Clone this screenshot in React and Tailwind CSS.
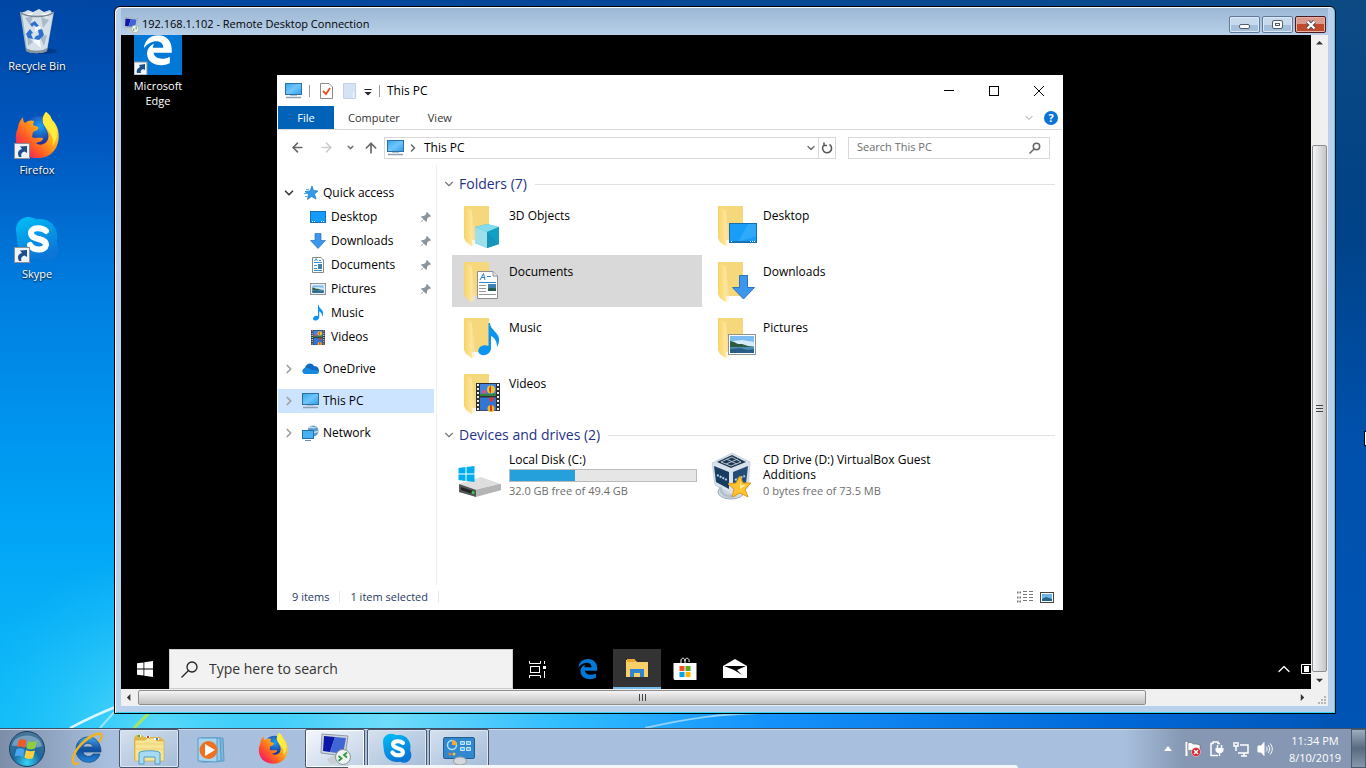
import React, { useState } from "react";
import { ArrowLeft, ArrowRight, ArrowUp, ChevronDown, ChevronRight, ChevronUp } from "lucide-react";

/* ---------- icons ---------- */

const ShortcutArrow = ({ y = 31 }) => (
  <g transform={`translate(1 ${y})`}>
    <rect x="0.5" y="0.5" width="15" height="15" fill="#eef3f8" stroke="#8a8f98" />
    <path d="M5 14C3 10 4 7 8 6L6 3.5L13 3V10L10.5 8.5C7.5 9.5 6.5 11 7.5 14Z" fill="#1f4e8c" />
  </g>
);

const RecycleBinIcon = () => (
  <svg viewBox="0 0 48 48" className="size-12">
    <ellipse cx="30" cy="43" rx="14" ry="3" fill="#002a66" opacity="0.5" />
    <path d="M7 4L13 43C18 46 29 46 34 43L41 4Z" fill="#a9bccb" opacity="0.92" />
    <path d="M9 5L15 2L20 4L26 1L31 4L37 2L40 6L34 41C28 43 19 43 14 41Z" fill="#d6e0e8" />
    <path d="M12 10L20 8L17 17ZM28 9L36 12L30 20ZM14 27L20 34L15 38ZM27 29L34 27L31 38Z" fill="#a9bac9" />
    <path d="M22 12L28 20L22 24ZM20 33L26 28L28 40ZM13 6L20 5L17 9ZM28 6L36 5L33 10Z" fill="#f7fafc" />
    <path d="M7 4C14 10 34 10 41 4" fill="none" stroke="#788791" strokeWidth="1.5" />
    <path d="M17 16l5-3 4 5-3 1-2-2-2 2zM13 26l4-5 3 4-2 1 2 5-5-1zM25 22l4-1 2 6-5 5-5-1 2-3 3-1z" fill="#2d6fcf" />
    <path d="M13 40C19 44 28 44 34 40L34 43C28 46 19 46 13 43Z" fill="#87949e" />
  </svg>
);

const FirefoxIcon = ({ shortcut, className = "size-12" }) => (
  <svg viewBox="0 0 48 48" className={className}>
    <defs>
      <linearGradient id="fxBody" x1="0.9" y1="0.1" x2="0.1" y2="0.9">
        <stop offset="0" stopColor="#fff04a" />
        <stop offset="0.4" stopColor="#ffa51b" />
        <stop offset="0.7" stopColor="#ff5a26" />
        <stop offset="1" stopColor="#f5156c" />
      </linearGradient>
      <radialGradient id="fxGlobe" cx="0.5" cy="0.3">
        <stop offset="0" stopColor="#17a3f3" />
        <stop offset="1" stopColor="#20309b" />
      </radialGradient>
    </defs>
    <circle cx="27" cy="21" r="17" fill="url(#fxGlobe)" />
    <path
      d="M33 0C39 4 38 8 40 9C50 18 48 46 25 46C2 46 0 25 5 16C5 12 7 8 10 5C10 9 11 10 12 11C15 8 19 8 21 9L20 13L25 15C26 18 23 19 20 20L19 25C22 27 26 25 30 26C30 30 25 30 23 31C26 34 33 33 35 27C37 21 32 15 30 11C29 7 30 3 33 0Z"
      fill="url(#fxBody)"
    />
    <path d="M33 0C39 4 38 8 40 9C45 17 46 27 39 34C44 23 30 16 30 9C30 5 31 3 33 0Z" fill="#ffec3f" />
    {shortcut && <ShortcutArrow />}
  </svg>
);

const SkypeIcon = ({ shortcut, className = "size-12" }) => (
  <svg viewBox="0 0 48 48" className={className}>
    <defs>
      <linearGradient id="skype" x1="0" y1="0" x2="0.4" y2="1">
        <stop offset="0" stopColor="#00c0f7" />
        <stop offset="1" stopColor="#0b75d8" />
      </linearGradient>
    </defs>
    <path
      d="M15 1C21 1 22 4 26 3C38 2 46 13 44 24C43 28 47 30 45 37C42 45 34 46 29 43C15 46 4 37 4 23C4 20 3 18 3 13C3 6 9 1 15 1Z"
      fill="url(#skype)"
    />
    <path
      d="M33 15C29 11 18 11 18 17C18 25 33 21 33 29C32 35 21 35 17 29"
      fill="none"
      stroke="#fff"
      strokeWidth="6"
      strokeLinecap="round"
    />
    {shortcut && <ShortcutArrow />}
  </svg>
);

const EDGE_PATH =
  "M2 22C4 8 13 2 24 2C37 2 45 11 45 24V29H17C18 38 31 41 42 35V45C28 52 7 47 7 30C7 22 13 17 18 15C16 18 16 20 16 21H32C32 7 12 8 2 22Z";

const EdgeTile = () => (
  <svg viewBox="0 0 48 48" className="size-12">
    <rect width="48" height="48" fill="#0078d7" />
    <path d={EDGE_PATH} transform="translate(8.5 7) scale(0.65)" fill="#fff" />
    <g transform="translate(0 35)">
      <rect width="13" height="13" fill="#f3f6f9" stroke="#8a8f98" />
      <path d="M3 11C2 8 4 6 6 5L5 3L11 2V8L9 7C7 8 6 9 7 11Z" fill="#1f4e8c" />
    </g>
  </svg>
);

const EdgeIcon = () => (
  <svg viewBox="0 0 48 50" className="size-[22px]">
    <path d={EDGE_PATH} fill="#0078d7" />
  </svg>
);

const WindowsIcon = ({ className = "size-4", fill = "#fff" }) => (
  <svg viewBox="0 0 16 16" className={className} fill={fill}>
    <path d="M0 2.3L6.5 1.4V7.6H0ZM7.3 1.3L16 0V7.6H7.3ZM0 8.4H6.5V14.6L0 13.7ZM7.3 8.4H16V16L7.3 14.7Z" />
  </svg>
);

const RdpIcon = ({ className = "size-4" }) => (
  <svg viewBox="0 0 32 32" className={className}>
    <path d="M8 26L16 22L21 25L16 31H11Z" fill="#c9ced4" />
    <path d="M3 1L29 3L26 23L2 20Z" fill="#cfd5dc" stroke="#9099a5" />
    <path d="M5 3L16 4L11 19L4 18Z" fill="#0a17a8" />
    <path d="M16 4L27 5L24 21L11 19Z" fill="#3f66d3" />
    <circle cx="24" cy="24" r="7.5" fill="#eef2f2" stroke="#8d9599" />
    <path d="M19.5 23L22.5 25.5L19.5 28M28 19.5L25 22L28 24.5" fill="none" stroke="#2f9a3b" strokeWidth="1.8" />
  </svg>
);

const PcIcon = ({ className = "h-4 w-[17px]" }) => (
  <svg viewBox="0 0 17 16" className={className}>
    <defs>
      <linearGradient id="pc" x1="0" y1="0" x2="1" y2="1">
        <stop offset="0" stopColor="#35a6ee" />
        <stop offset="0.5" stopColor="#6fc6fb" />
        <stop offset="1" stopColor="#2d9ceb" />
      </linearGradient>
    </defs>
    <rect x="0.5" y="0.5" width="16" height="11" fill="url(#pc)" stroke="#2b6fa5" />
    <path d="M1 14.5H16" stroke="#8aa0b2" strokeWidth="1.5" />
    <path d="M5 12.5H12" stroke="#b5c4d0" />
  </svg>
);

const StarIcon = () => (
  <svg viewBox="0 0 16 16" className="size-4">
    <path d="M9 1L10.5 5.5L15 6L11.5 9L13 14L8.5 11.5L4.5 14.5L5.5 9.5L2 6.5L7 6Z" fill="#2f9bea" stroke="#1c75b9" strokeWidth="0.7" />
    <path d="M1 8.5H4M2 11.5H4.5M3 4.5H6" stroke="#4db0f2" />
  </svg>
);

const DesktopSmall = () => (
  <svg viewBox="0 0 16 16" className="size-4">
    <rect x="0.5" y="2.5" width="15" height="11" fill="#159cfb" stroke="#1470b8" />
    <path d="M2 12.5H5M11 12.5H14" stroke="#fff" strokeDasharray="1 1" />
  </svg>
);

const DownArrow = ({ className = "size-4" }) => (
  <svg viewBox="0 0 16 16" className={className}>
    <path d="M5 0.5H11V7.5H15.5L8 15.5L0.5 7.5H5Z" fill="#3b96ec" stroke="#2b74ba" strokeWidth="0.7" />
  </svg>
);

const DocSmall = () => (
  <svg viewBox="0 0 16 16" className="size-4">
    <path d="M2.5 0.5H11L13.5 3V15.5H2.5Z" fill="#fff" stroke="#84898d" />
    <path d="M4 5.5H12M4 8.5H7M4 11.5H7M4 13.5H12" stroke="#2f8fdb" />
    <path d="M4.5 4L6 1.5L7.5 4M9 3.5H11" fill="none" stroke="#2f8fdb" />
    <rect x="8" y="7" width="4" height="5" fill="#4681a8" />
  </svg>
);

const Landscape = () => (
  <>
    <rect x="2" y="2" width="24" height="17" fill="#7dbcf2" />
    <path d="M2 8C8 6 10 7 14 6L26 8V12H2Z" fill="#d5ecf8" />
    <path d="M2 7L6 8L10 10L14 10L20 12L26 13V14H2Z" fill="#2d5a41" />
    <path d="M2 13H26V19H2Z" fill="#4d8eb5" />
    <path d="M2 15L12 14L20 16L26 15V19H2Z" fill="#295f86" />
  </>
);

const PictureSmall = () => (
  <svg viewBox="0 0 28 21" preserveAspectRatio="none" className="h-3 w-4">
    <rect x="1" y="1" width="26" height="19" fill="#fff" stroke="#8e9499" strokeWidth="2" />
    <g transform="translate(2.5 2.5) scale(0.82 0.76)">
      <Landscape />
    </g>
  </svg>
);

const MUSIC_PATH =
  "M12 0C12 7 22 10 21 17C21 20 20 22 19 24C19 19 17 15 13 13V25C13 30 8 33 4 32C0 31 -1 27 2 24C5 22 8 22 10.5 23V0Z";

const MusicSmall = () => (
  <svg viewBox="-3 0 27 33" className="h-4 w-4">
    <path d={MUSIC_PATH} fill="#0b94f0" />
  </svg>
);

const Film = () => (
  <>
    <rect width="24" height="28" fill="#303030" />
    <rect x="4" y="1" width="16" height="12" fill="#4285e0" />
    <rect x="4" y="14.5" width="16" height="13" fill="#3474d2" />
    <path d="M4 11C8 9 12 12 20 10V13H4Z" fill="#318444" />
    <circle cx="15" cy="6.5" r="4" fill="#f3c52b" />
    <path d="M15 2.5V10.5C12.5 9 12.5 4 15 2.5Z" fill="#d63f27" />
    <circle cx="8" cy="9" r="2" fill="#e2507b" />
    <path d="M13 14.5H18L16.5 19H14.5Z" fill="#dd3b24" />
    <circle cx="15" cy="25.5" r="3.5" fill="#f3b92b" />
    <path d="M14 22V28H16V22Z" fill="#d63f27" />
    <path d="M2 1V28M22 1V28" stroke="#f4f4f4" strokeWidth="2" strokeDasharray="2 2" />
  </>
);

const VideoSmall = () => (
  <svg viewBox="0 0 24 28" preserveAspectRatio="none" className="h-[15px] w-[14px]">
    <Film />
  </svg>
);

const OneDriveIcon = () => (
  <svg viewBox="0 0 17 12" className="h-3 w-[17px]">
    <path d="M4 11C0 11 -1 6 3 5C4 0 10 -1 12 3C16 3 17 6 17 8C17 10 15 11 14 11Z" fill="#1268c3" />
    <path d="M3 5C6 4 8 6 10 7L17 8C17 10 15 11 14 11H4C1 11 0 9 1 7Z" fill="#168ae0" />
  </svg>
);

const NetworkIcon = () => (
  <svg viewBox="0 0 17 16" className="h-4 w-[17px]">
    <circle cx="11" cy="6" r="5.5" fill="#5b9ccb" />
    <path d="M7 3C10 1 11 4 14 2M12 8C13 6 14 8 16 6" fill="none" stroke="#c3dfeb" strokeWidth="1.5" />
    <rect x="0.5" y="5.5" width="11" height="8" fill="#48b1f4" stroke="#2272a8" />
    <path d="M3 15.5H9" stroke="#6f8ea3" />
  </svg>
);

const PinIcon = () => (
  <svg viewBox="0 0 12 12" className="size-3" fill="#8a959e">
    <path d="M7 1L11 5L10 6L9 5.7L7 8L7 10L6 11L3.7 8.5L1 11.5L0.5 11L3.5 8L1 6L2 5H4L6.3 3L6 2Z" />
  </svg>
);

const FolderIcon = ({ children }) => (
  <svg viewBox="0 0 48 48" className="size-12">
    <defs>
      <linearGradient id="folderFront" x1="0" y1="0" x2="1" y2="0">
        <stop offset="0" stopColor="#f6d268" />
        <stop offset="1" stopColor="#ffe79b" />
      </linearGradient>
    </defs>
    <path d="M8 5H33V39H15Z" fill="#f5d77c" />
    <path d="M8 5L16 10V45.5L10 41L8 37Z" fill="url(#folderFront)" />
    <path d="M16 10V45.5L19 43V39" fill="#fbecc0" opacity="0.5" />
    {children}
  </svg>
);

const overlays = {
  objects: (
    <g>
      <path d="M31 23L43 26V43L31 47L19 42V26Z" fill="#28b3d3" />
      <path d="M31 23L43 26L31 31L19 26Z" fill="#83dcec" />
      <path d="M19 26L31 31V47L19 42Z" fill="#9ddfeb" />
      <path d="M31 31L43 26V43L31 47Z" fill="#129fc4" />
      <path d="M31 31V47L43 43Z" fill="#1788ad" opacity="0.5" />
    </g>
  ),
  desktop: (
    <g>
      <rect x="19.5" y="22.5" width="27" height="19" fill="#189df8" stroke="#176eaa" />
      <path d="M28 41L38 23H46V35Z" fill="#3fb2fb" opacity="0.6" />
      <path d="M20 40.5H46" stroke="#1b77ba" />
      <path d="M21 40.5H22M40 40.5H46" stroke="#fff" strokeDasharray="1 1" />
    </g>
  ),
  documents: (
    <g>
      <path d="M21.5 14.5H37L41.5 19V41.5H21.5Z" fill="#fff" stroke="#8a8e92" />
      <path d="M37 14.5V19H41.5" fill="#e8e8e8" stroke="#8a8e92" />
      <path d="M24 23L27.5 16.5L29 23M25 20.5H29M31 19.5H35M23 25.5H40" fill="none" stroke="#2a83cf" />
      <path d="M23 28.5H30M23 31.5H30M23 34.5H30M23 37.5H40" stroke="#989898" />
      <rect x="32" y="27" width="8" height="7" fill="#3e83b1" />
      <path d="M32 32C35 29 37 32 40 31V34H32Z" fill="#285d4e" />
    </g>
  ),
  downloads: (
    <path d="M29.5 18.5H37.5V30.5H44.5L33.5 42L22.5 30.5H29.5Z" fill="#3b96ec" stroke="#2b74ba" />
  ),
  music: (
    <g transform="translate(22 10)">
      <path d={MUSIC_PATH} fill="#0b94f0" />
    </g>
  ),
  pictures: (
    <g transform="translate(18 21)">
      <rect x="0.5" y="0.5" width="27" height="20" fill="#fff" stroke="#8e9499" />
      <Landscape />
    </g>
  ),
  videos: (
    <g transform="translate(20 14)">
      <Film />
    </g>
  ),
};

const DriveIcon = () => (
  <svg viewBox="0 0 48 48" className="size-12">
    <path d="M3 33L24 26L45 33V38L20 44L3 40Z" fill="#a7a7a7" />
    <path d="M3 32L25 25L45 32L20 38Z" fill="#dedede" />
    <path d="M3 32L20 38V45L3 40Z" fill="#555" />
    <path d="M20 38L45 32V38L20 45Z" fill="#b5b5b5" />
    <path d="M5 35L17 39V42L5 38Z" fill="#222" />
    <circle cx="17" cy="40.5" r="1.5" fill="#35d04d" />
    <g transform="translate(2.5 14)" fill="#00adef">
      <path d="M0 2L7 1V7.5H0ZM8 1L16 0V7.5H8ZM0 8.5H7V15L0 14ZM8 8.5H16V16L8 15Z" />
    </g>
  </svg>
);

const VirtualBoxIcon = () => (
  <svg viewBox="0 0 48 48" className="size-12">
    <ellipse cx="21" cy="40" rx="13" ry="7" fill="#d4dde5" stroke="#9aaab8" />
    <path d="M22 1L40 10L38 36L22 43L5 33L2 11Z" fill="#d7e2ec" stroke="#aab7c4" strokeWidth="0.5" />
    <path d="M22 3L36 10L21 16L7 10Z" fill="#20374d" />
    <path d="M22 5L31 10L21 14L11 10ZM16 7L27 12M28 7L16 12" fill="none" stroke="#afc0d0" />
    <path d="M4 14L19 20V37L6 30Z" fill="#173b61" />
    <path d="M23 20L38 14L36 32L23 37Z" fill="#244d75" />
    <path d="M7 23L17 28M25 28L35 24" stroke="#b9cfe2" strokeWidth="2" strokeDasharray="2 1" />
    <path d="M10 35C11 43 18 46 26 43" fill="none" stroke="#b3c0cd" strokeWidth="3" />
    <path d="M30 24L33 31L41 31L35 37L38 45L30 41L22 45L24 37L18 32L26 31Z" fill="#ffc334" stroke="#e39a18" />
    <path d="M30 27L31 33L36 33L30 37Z" fill="#fff0a1" />
  </svg>
);

const StartOrb = () => (
  <svg viewBox="0 0 38 38" className="size-[38px]">
    <defs>
      <radialGradient id="orb" cx="0.5" cy="0.9" r="0.9">
        <stop offset="0" stopColor="#35d4f4" />
        <stop offset="0.45" stopColor="#1c679f" />
        <stop offset="1" stopColor="#4b7796" />
      </radialGradient>
    </defs>
    <circle cx="19" cy="19" r="17.5" fill="url(#orb)" stroke="#163d60" />
    <path d="M4 16C6 2 32 2 34 16C25 20 13 15 4 16Z" fill="#c1d8e7" opacity="0.45" />
    <path d="M11 10C14 8 16 9 18.5 10.5L17 18C14 16.5 12 16 9 17Z" fill="#ee5b2b" />
    <path d="M20 11C23 12.5 26 12 29 11L27 18.5C24 20 21 19.5 18.5 18.5Z" fill="#8ecb3d" />
    <path d="M8.5 19C11 18 14 18 16.5 19.5L15 27C12 25.5 9.5 25.5 6.5 26.5Z" fill="#4aa5ec" />
    <path d="M18 20C21 21.5 24 21.5 27 20.5L25 28C22 29.5 19 29 16.5 27.5Z" fill="#ffd03e" />
  </svg>
);

const IeIcon = () => (
  <svg viewBox="0 0 34 34" className="size-[34px]">
    <defs>
      <linearGradient id="ie" x1="0" y1="0" x2="0" y2="1">
        <stop offset="0" stopColor="#3fa5e8" />
        <stop offset="0.5" stopColor="#0f4f9f" />
        <stop offset="1" stopColor="#2486d8" />
      </linearGradient>
    </defs>
    <path
      d="M18 5C26 5 31 11 31 20H13C14 25 21 26 23 22H30C26 35 6 32 6 18C6 10 11 5 18 5ZM13 15H23C22 10 14 10 13 15Z"
      fill="url(#ie)"
      fillRule="evenodd"
      stroke="#123f78"
      strokeWidth="0.7"
    />
    <path d="M29 10C34 3 32 0 24 3C15 7 5 17 3 26C2 32 5 33 9 31" fill="none" stroke="#f0b323" strokeWidth="2.5" />
  </svg>
);

const LibrariesIcon = () => (
  <svg viewBox="0 0 34 34" className="size-[34px]">
    <path d="M2 6L4 3H10L12 5H28L32 8V28H2Z" fill="#dfb94b" />
    <path d="M3 8H13L15 6H23L25 9H32V29H3Z" fill="#f8e495" stroke="#d3ac43" strokeWidth="0.7" />
    <path d="M6 4H9M14 5H18M22 7H27" stroke="#fff" strokeWidth="2" />
    <path d="M6 4H8" stroke="#4aa345" strokeWidth="2" />
    <path d="M15 5H17" stroke="#d64a32" strokeWidth="2" />
    <path d="M24 7H26" stroke="#3b81cf" strokeWidth="2" />
    <path d="M3 12H31M3 17H31" stroke="#ecd172" />
    <path d="M7 21C7 18 28 18 28 21V32H23V25H12V32H7Z" fill="#a6dcf3" stroke="#4f9ec6" />
  </svg>
);

const MediaPlayerIcon = () => (
  <svg viewBox="0 0 34 34" className="size-[34px]">
    <path d="M10 6H29L30 29L10 30Z" fill="#7bb6dc" stroke="#5a9cc8" />
    <path d="M7 6H26L27 29L7 30Z" fill="#92c8e8" stroke="#5a9cc8" />
    <path d="M4 6H23V30L4 29Z" fill="#a7d4ee" stroke="#5a9cc8" />
    <circle cx="14.5" cy="18" r="9" fill="#ef7020" />
    <path d="M11 12L21 18L11 24Z" fill="#fff" />
  </svg>
);

const ControlPanelIcon = () => (
  <svg viewBox="0 0 34 34" className="size-[34px]">
    <rect x="1.5" y="5.5" width="31" height="21" rx="1.5" fill="#3188cf" stroke="#225e96" />
    <circle cx="10" cy="13" r="4.5" fill="none" stroke="#aee0fa" strokeWidth="1.5" />
    <path d="M10 13V8A5 5 0 0 1 15 13Z" fill="#f6a92e" />
    <path d="M18.5 9.5H22.5V12.5H18.5ZM24.5 9.5H28.5V12.5H24.5ZM18.5 15.5H22.5V18.5H18.5ZM24.5 15.5H28.5V18.5H24.5Z" fill="#5bb8f0" stroke="#c3e6fb" />
    <circle cx="8" cy="22" r="1.5" fill="#ee7c2b" />
    <circle cx="12" cy="22" r="1.5" fill="#efc63b" />
    <ellipse cx="18" cy="29" rx="6.5" ry="4" fill="#d3d7db" stroke="#969ca3" />
  </svg>
);

const TaskViewIcon = () => (
  <svg viewBox="0 0 17 17" className="size-[17px]" fill="none" stroke="#fff">
    <path d="M0.5 0V2.5H11.5V0M0.5 17V14.5H11.5V17M15.5 0V3M15.5 10V17" />
    <rect x="1.5" y="5.5" width="9" height="6" />
    <rect x="14" y="5" width="3" height="3" fill="#fff" stroke="none" />
  </svg>
);

const FileExplorerIcon = () => (
  <svg viewBox="0 0 22 19" className="h-[19px] w-[22px]">
    <path d="M0 1H9L11 3H22V18H0Z" fill="#f9d067" />
    <path d="M1 0H9V3H1Z" fill="#f2a52d" />
    <path d="M4 18V10H18V18H14V14H8V18Z" fill="#3283d2" />
  </svg>
);

const StoreIcon = () => (
  <svg viewBox="0 0 24 24" className="size-6">
    <path d="M8 6V3C9 0 12 1 12 4M12 6V3C13 0 17 1 16 5" fill="none" stroke="#fff" />
    <path d="M0.5 6H23.5V23H2C1 23 0.5 22 0.5 21Z" fill="#fff" />
    <path d="M6.5 9H11.5V14H6.5Z" fill="#f25022" />
    <path d="M12.5 9H17.5V14H12.5Z" fill="#5ba81e" />
    <path d="M6.5 15H11.5V20H6.5Z" fill="#00a4ef" />
    <path d="M12.5 15H17.5V20H12.5Z" fill="#ffb900" />
  </svg>
);

const MailIcon = () => (
  <svg viewBox="0 0 24 20" className="h-5 w-6">
    <path d="M0 7L12 0L24 7V19H0Z" fill="#fff" />
    <path d="M1 7H23L14 11L19 16L11 11Z" fill="#000" />
  </svg>
);

/* ---------- remote explorer window ---------- */

const quickAccess = [
  { name: "Desktop", icon: <DesktopSmall />, pinned: true },
  { name: "Downloads", icon: <DownArrow />, pinned: true },
  { name: "Documents", icon: <DocSmall />, pinned: true },
  { name: "Pictures", icon: <PictureSmall />, pinned: true },
  { name: "Music", icon: <MusicSmall /> },
  { name: "Videos", icon: <VideoSmall /> },
];

const roots = [
  { name: "OneDrive", icon: <OneDriveIcon /> },
  { name: "This PC", icon: <PcIcon /> },
  { name: "Network", icon: <NetworkIcon /> },
];

const folders = [
  { name: "3D Objects", kind: "objects" },
  { name: "Desktop", kind: "desktop" },
  { name: "Documents", kind: "documents" },
  { name: "Downloads", kind: "downloads" },
  { name: "Music", kind: "music" },
  { name: "Pictures", kind: "pictures" },
  { name: "Videos", kind: "videos" },
];

const GroupHeading = ({ children }) => (
  <h2 className="flex h-[26px] items-center text-sm text-[#1e3287]">
    <ChevronDown className="mr-[3px] size-[14px] text-[#777]" strokeWidth={2} />
    {children}
    <span className="ml-2 h-px flex-1 bg-[#e2e2e2]" />
  </h2>
);

const NavigationTree = () => (
  <nav className="w-[159px] shrink-0 border-r border-[#f0f0f0] pt-4 pr-[2px]">
    <button type="button" className="flex h-6 w-full items-center">
      <ChevronDown className="ml-1 size-[14px] text-[#404040]" strokeWidth={3} />
      <span className="mr-1 ml-[7px] flex w-4 justify-center"><StarIcon /></span>
      Quick access
    </button>
    {quickAccess.map((item) => (
      <button key={item.name} type="button" className="flex h-6 w-full items-center pr-[2px] pl-8">
        <span className="flex w-[21px] shrink-0 justify-center pr-[5px]">{item.icon}</span>
        <span className="flex-1 text-left">{item.name}</span>
        {item.pinned && <PinIcon />}
      </button>
    ))}
    {roots.map((item) => (
      <button
        key={item.name}
        type="button"
        className={`mt-2 flex h-6 w-full items-center ${item.name === "This PC" ? "bg-[#cce4ff]" : ""}`}
      >
        <ChevronRight className="ml-1 size-[14px] text-[#a0a0a0]" strokeWidth={3} />
        <span className="mr-1 ml-[6px] flex w-[17px] justify-center">{item.icon}</span>
        {item.name}
      </button>
    ))}
  </nav>
);

const FolderTile = ({ folder, selected, onSelect }) => (
  <button
    type="button"
    onClick={onSelect}
    className={`flex h-[52px] items-start pt-[2px] pl-1 text-left ${selected ? "bg-[#d9d9d9]" : ""}`}
  >
    <FolderIcon>{overlays[folder.kind]}</FolderIcon>
    <span className="ml-[5px] pt-[7px] leading-[15px]">{folder.name}</span>
  </button>
);

const ExplorerWindow = () => {
  const [selected, setSelected] = useState("Documents");

  return (
    <section className="mt-10 mb-[39px] ml-[82px] flex w-[786px] shrink-0 flex-col bg-white p-px pt-0 text-xs text-black">
      <header className="flex h-[31px] shrink-0 items-center">
        <PcIcon className="ml-[7px] h-4 w-[17px]" />
        <span className="ml-[7px] h-3 w-px bg-[#999]" />
        <svg viewBox="0 0 13 16" className="ml-[10px] h-4 w-[13px]">
          <path d="M0.5 0.5H9L12.5 4V15.5H0.5Z" fill="#fff" stroke="#8b8b8b" />
          <path d="M3 8L6 11L10 5" fill="none" stroke="#e35225" strokeWidth="1.8" />
        </svg>
        <svg viewBox="0 0 13 16" className="ml-[10px] h-4 w-[13px]">
          <path d="M0.5 0.5H12.5V15.5H0.5Z" fill="#d5e4f4" stroke="#c3d3e5" />
          <path d="M10.5 9V15" stroke="#f3f7fb" />
        </svg>
        <svg viewBox="0 0 8 7" className="mt-[3px] ml-2 h-[7px] w-2">
          <path d="M0.5 0.5H7.5" stroke="#222" />
          <path d="M0.5 3H7.5L4 6.5Z" fill="#222" />
        </svg>
        <span className="ml-[7px] h-3 w-px bg-[#999]" />
        <h1 className="ml-[7px]">This PC</h1>
        <div className="ml-auto flex self-stretch">
          <button type="button" aria-label="Minimize" className="flex w-[46px] items-center justify-center">
            <span className="h-px w-[10px] bg-black" />
          </button>
          <button type="button" aria-label="Maximize" className="flex w-[44px] items-center justify-center">
            <span className="size-[10px] border border-black" />
          </button>
          <button type="button" aria-label="Close" className="flex w-[46px] items-center justify-center">
            <svg viewBox="0 0 10 10" className="size-[10px]" stroke="#000">
              <path d="M0 0L10 10M10 0L0 10" />
            </svg>
          </button>
        </div>
      </header>

      <div className="flex h-6 shrink-0 items-center border-b border-[#dadbdc] text-[11px] text-[#333]">
        <button type="button" className="h-full w-14 bg-[#0063b8] pt-px text-white">File</button>
        <button type="button" className="ml-[14px] pt-px">Computer</button>
        <button type="button" className="ml-7 pt-px">View</button>
        <ChevronDown className="ml-auto size-3 text-[#999]" />
        <button type="button" aria-label="Help" className="mr-1 ml-[9px] size-[14px] rounded-full bg-[#0a74d8] text-center text-[11px] leading-[14px] font-bold text-white">
          ?
        </button>
      </div>

      <div className="flex h-[35px] shrink-0 items-center pr-3">
        <button type="button" aria-label="Back" className="ml-3"><ArrowLeft className="size-[15px] text-[#666]" strokeWidth={2.5} /></button>
        <button type="button" aria-label="Forward" className="ml-[14px]"><ArrowRight className="size-[15px] text-[#ccc]" strokeWidth={2.5} /></button>
        <button type="button" aria-label="Recent" className="ml-3"><ChevronDown className="size-[9px] text-[#777]" strokeWidth={4} /></button>
        <button type="button" aria-label="Up" className="ml-2"><ArrowUp className="size-4 text-[#666]" strokeWidth={2.5} /></button>
        <div className="ml-[5px] flex h-[22px] flex-1 items-center border border-[#d9d9d9]">
          <PcIcon className="ml-[2px] h-4 w-[17px]" />
          <ChevronRight className="ml-[3px] size-3 text-[#666]" strokeWidth={3} />
          <span className="ml-[5px] flex-1">This PC</span>
          <ChevronDown className="size-3 text-[#666]" strokeWidth={2.5} />
          <button type="button" aria-label="Refresh" className="ml-px flex h-full w-[17px] items-center justify-center border-l border-[#d9d9d9]">
            <svg viewBox="0 0 12 12" className="size-3" fill="none" stroke="#555" strokeWidth="1.5">
              <path d="M8.5 2.5A4.5 4.5 0 1 1 3 3M3 0.5V3.5H6" />
            </svg>
          </button>
        </div>
        <label className="ml-3 flex h-[22px] w-[202px] items-center border border-[#d9d9d9] px-2">
          <input type="text" aria-label="Search This PC" placeholder="Search This PC" className="min-w-0 flex-1 text-[11px] outline-none placeholder:text-[#6d6d6d]" />
          <svg viewBox="0 0 12 12" className="size-3" fill="none" stroke="#666" strokeWidth="1.5">
            <circle cx="7.5" cy="4.5" r="3.2" />
            <path d="M5 7L0.5 11.5" />
          </svg>
        </label>
      </div>

      <div className="flex flex-1">
        <NavigationTree />
        <main className="flex-1 pt-[6px] pr-[7px] pl-[5px]">
          <GroupHeading>Folders (7)</GroupHeading>
          <div className="mt-[2px] ml-[10px] grid grid-cols-[250px_250px] gap-1">
            {folders.map((folder) => (
              <FolderTile
                key={folder.name}
                folder={folder}
                selected={selected === folder.name}
                onSelect={() => setSelected(folder.name)}
              />
            ))}
          </div>
          <div className="h-[3px]" />
          <GroupHeading>Devices and drives (2)</GroupHeading>
          <div className="ml-[10px] grid grid-cols-[250px_250px] gap-1">
            <button type="button" className="flex items-start pt-1 pr-[5px] pl-1 text-left leading-[15px]">
              <DriveIcon />
              <span className="ml-[5px] flex-1">
                <span className="block">Local Disk (C:)</span>
                <span className="mt-[2px] block h-[13px] border border-[#bcbcbc] bg-[#e6e6e6]">
                  <span className="block h-full w-[35%] bg-[#26a0da]" />
                </span>
                <span className="mt-px block text-[11px] text-[#6d6d6d]">32.0 GB free of 49.4 GB</span>
              </span>
            </button>
            <button type="button" className="flex items-start pt-1 pl-1 text-left leading-[15px]">
              <VirtualBoxIcon />
              <span className="ml-[5px] w-[170px]">
                <span className="block">CD Drive (D:) VirtualBox Guest Additions</span>
                <span className="mt-px block text-[11px] text-[#6d6d6d]">0 bytes free of 73.5 MB</span>
              </span>
            </button>
          </div>
        </main>
      </div>

      <footer className="flex h-6 shrink-0 items-center pr-2 pl-[14px] text-[11px] text-[#1f3a5f]">
        <span>9 items</span>
        <span className="ml-[10px] h-3 w-px bg-[#e8e8e8]" />
        <span className="ml-[10px]">1 item selected</span>
        <span className="ml-[10px] h-3 w-px bg-[#e8e8e8]" />
        <button type="button" aria-label="Details view" className="ml-auto">
          <svg viewBox="0 0 16 12" className="h-3 w-4" stroke="#777">
            <path d="M0 1.5H4M0 6.5H4M0 10.5H4" strokeWidth="2" strokeDasharray="1.5 1" />
            <path d="M6 0.5H10M12 0.5H16M6 3.5H10M12 3.5H16M6 6.5H10M12 6.5H16M6 9.5H10M12 9.5H16" />
          </svg>
        </button>
        <button type="button" aria-label="Large icons view" className="ml-[7px]">
          <svg viewBox="0 0 14 11" className="h-[11px] w-[14px]">
            <rect x="0.5" y="0.5" width="13" height="10" fill="#fff" stroke="#444" />
            <rect x="2" y="2" width="10" height="7" fill="#6ab6e8" />
            <path d="M2 7L6 5L12 7V9H2Z" fill="#256287" />
          </svg>
        </button>
      </footer>
    </section>
  );
};

/* ---------- remote desktop ---------- */

const RemoteTaskbar = () => (
  <footer className="flex h-10 shrink-0 items-stretch bg-black">
    <button type="button" aria-label="Start" className="flex w-12 items-center justify-center">
      <WindowsIcon />
    </button>
    <label className="flex w-[344px] items-center border border-[#ccc] bg-[#f2f2f2] pl-[11px]">
      <svg viewBox="0 0 17 17" className="size-[17px]" fill="none" stroke="#222" strokeWidth="1.3">
        <circle cx="11" cy="6" r="5" />
        <path d="M7.5 9.5L0.5 16.5" />
      </svg>
      <input type="text" aria-label="Type here to search" placeholder="Type here to search" className="ml-[11px] min-w-0 flex-1 text-sm outline-none placeholder:text-[#333]" />
    </label>
    <button type="button" aria-label="Task View" className="flex w-12 items-center justify-center"><TaskViewIcon /></button>
    <button type="button" aria-label="Edge" className="ml-[3px] flex w-12 items-center justify-center"><EdgeIcon /></button>
    <button type="button" aria-label="File Explorer" className="ml-px flex w-12 items-center justify-center border-b-2 border-[#76b9ed] bg-[#333]"><FileExplorerIcon /></button>
    <button type="button" aria-label="Store" className="flex w-12 items-center justify-center"><StoreIcon /></button>
    <button type="button" aria-label="Mail" className="ml-[2px] flex w-12 items-center justify-center"><MailIcon /></button>
    <div className="ml-auto flex items-center text-white">
      <ChevronUp className="size-5" strokeWidth={1.5} />
      <svg viewBox="0 0 10 10" className="ml-[7px] h-[10px] w-[10px]">
        <path d="M10 0.5H0.5V9.5H10" fill="none" stroke="#fff" />
        <path d="M3 2H8V8H3Z" fill="#fff" />
      </svg>
    </div>
  </footer>
);

const RemoteDesktop = () => (
  <div className="flex min-w-0 flex-1 flex-col overflow-hidden bg-black">
    <div className="flex flex-1">
      <div className="-mt-2 flex w-[74px] shrink-0 flex-col items-center text-center text-[11px] leading-[15px] text-white">
        <EdgeTile />
        <span className="mt-[3px] w-[60px]">Microsoft Edge</span>
      </div>
      <ExplorerWindow />
    </div>
    <RemoteTaskbar />
  </div>
);

const ScrollArrow = ({ direction, label }) => {
  const paths = { up: "M0 5L4 1L8 5Z", down: "M0 2L4 6L8 2Z", left: "M5 0L1 4L5 8Z", right: "M2 0L6 4L2 8Z" };
  return (
    <button type="button" aria-label={label} className="flex size-[17px] shrink-0 items-center justify-center">
      <svg viewBox="0 0 8 8" className="size-[7px]" fill="#333"><path d={paths[direction]} /></svg>
    </button>
  );
};

const VerticalScrollbar = () => (
  <div className="flex w-[17px] shrink-0 flex-col bg-[#f0f0f0]">
    <ScrollArrow direction="up" label="Scroll up" />
    <div className="flex-[93]" />
    <div className="mx-px flex flex-[526] flex-col items-center justify-center gap-[2px] rounded-xs border border-[#8e8e8e] bg-linear-to-r from-[#f5f5f5] to-[#c4c6ca]">
      {[0, 1, 2].map((n) => <span key={n} className="h-px w-[7px] bg-[#444]" />)}
    </div>
    <ScrollArrow direction="down" label="Scroll down" />
  </div>
);

const HorizontalScrollbar = () => (
  <div className="flex h-[17px] shrink-0 bg-[#f0f0f0]">
    <ScrollArrow direction="left" label="Scroll left" />
    <div className="my-px flex flex-[1008] items-center justify-center gap-[2px] rounded-xs border border-[#8e8e8e] bg-linear-to-b from-[#f5f5f5] to-[#c0c0c0]">
      {[0, 1, 2].map((n) => <span key={n} className="h-[7px] w-px bg-[#444]" />)}
    </div>
    <div className="flex-[148]" />
    <ScrollArrow direction="right" label="Scroll right" />
    <svg viewBox="0 0 17 17" className="size-[17px]" fill="#b5b5b5">
      <path d="M13 7h2v2h-2zM13 10h2v2h-2zM10 10h2v2h-2zM13 13h2v2h-2zM10 13h2v2h-2zM7 13h2v2h-2z" />
    </svg>
  </div>
);

const captionButton =
  "flex h-[17px] w-[31px] items-center justify-center rounded-xs border border-[#5f7a99] bg-linear-to-b from-[#c7d9ec] from-50% to-[#a5c0dc] to-50% shadow-[inset_0_0_0_1px_#dbe8f5]";

const RemoteConnectionWindow = () => (
  <section className="mt-[6px] mr-[30px] mb-[14px] flex min-w-0 flex-1 flex-col rounded-t-md border border-black bg-[#b9d1ea] pr-[7px] pb-[7px] pl-[6px] shadow-[inset_1px_1px_0_0_#f4faff,inset_-1px_-1px_0_0_#35d7f5]">
    <header className="mt-px -mb-px flex h-7 shrink-0 items-center bg-linear-to-b from-[#9cb7d4] to-[#b9d1ea] pt-[5px] pr-[2px] pl-[2px] text-[11px] text-black">
      <RdpIcon className="size-4" />
      <h1 className="ml-[3px]">192.168.1.102 - Remote Desktop Connection</h1>
      <div className="ml-auto flex gap-[2px]">
        <button type="button" aria-label="Minimize" className={captionButton}>
          <span className="mt-1 h-[5px] w-[11px] rounded-xs border border-[#555e6b] bg-white" />
        </button>
        <button type="button" aria-label="Restore" className={captionButton}>
          <span className="flex h-[9px] w-[11px] items-center justify-center rounded-xs border border-[#555e6b] bg-white">
            <span className="h-[3px] w-[5px] border border-[#555e6b]" />
          </span>
        </button>
        <button
          type="button"
          aria-label="Close"
          className="flex h-[17px] w-[31px] items-center justify-center rounded-xs border border-[#4c1a20] bg-linear-to-b from-[#dc9a8c] from-45% to-[#c04a2c] to-50% shadow-[inset_0_0_0_1px_#e6b3a6]"
        >
          <svg viewBox="0 0 12 10" className="h-[10px] w-3">
            <path d="M2.5 1.5L9.5 8.5M9.5 1.5L2.5 8.5" stroke="#4b4b58" strokeWidth="4" />
            <path d="M2.5 1.5L9.5 8.5M9.5 1.5L2.5 8.5" stroke="#fff" strokeWidth="2.3" />
          </svg>
        </button>
      </div>
    </header>
    <div className="flex min-h-0 flex-1">
      <RemoteDesktop />
      <VerticalScrollbar />
    </div>
    <HorizontalScrollbar />
  </section>
);

/* ---------- host desktop ---------- */

const DesktopIcon = ({ label, children }) => (
  <button type="button" className="flex h-[104px] w-full flex-col items-center text-[11px] text-white [text-shadow:0_1px_2px_#000]">
    {children}
    <span className="mt-[2px]">{label}</span>
  </button>
);

const TaskButton = ({ label, open, active, children }) => (
  <button
    type="button"
    aria-label={label}
    className={`flex w-[60px] items-center justify-center rounded-xs border ${
      active
        ? "border-[#4a5669] bg-linear-to-br from-[#f4f8fc] to-[#bed0e4] shadow-[inset_0_0_0_1px_#fff]"
        : open
          ? "border-[#4a5669] bg-linear-to-br from-[#d5e1ee] to-[#a5bcd8] shadow-[inset_0_0_0_1px_#dde8f4]"
          : "border-transparent"
    }`}
  >
    {children}
  </button>
);

const Taskbar = () => (
  <footer className="flex h-10 shrink-0 border-t border-[#3e5068] bg-linear-to-r from-[#7c8da8] via-[#a8c0de] via-8% to-[#a8c0de] shadow-[inset_0_1px_0_0_#cbdaea]">
    <button type="button" aria-label="Start" className="mr-[3px] flex w-[54px] items-center justify-center"><StartOrb /></button>
    <div className="flex gap-[2px]">
      <TaskButton label="Internet Explorer"><IeIcon /></TaskButton>
      <TaskButton label="Libraries" open><LibrariesIcon /></TaskButton>
      <TaskButton label="Media Player"><MediaPlayerIcon /></TaskButton>
      <TaskButton label="Firefox"><FirefoxIcon className="size-8" /></TaskButton>
      <TaskButton label="Remote Desktop Connection" open active><RdpIcon className="size-8" /></TaskButton>
      <TaskButton label="Skype" open><SkypeIcon className="size-8" /></TaskButton>
      <TaskButton label="Control Panel" open><ControlPanelIcon /></TaskButton>
    </div>
    <div className="ml-auto flex items-center bg-linear-to-r from-transparent to-[#8597b2] to-25% pl-10 text-[11px] text-white">
      <svg viewBox="0 0 8 5" className="h-[5px] w-2" fill="#fff"><path d="M0 5L4 0L8 5Z" /></svg>
      <svg viewBox="0 0 16 16" className="ml-[13px] size-4">
        <path d="M1.5 1V15" stroke="#fff" strokeWidth="2" />
        <path d="M3 2C6 0 8 4 11 3L15 4V10C11 11 7 8 3 10Z" fill="#fff" stroke="#555" strokeWidth="0.5" />
        <circle cx="11" cy="11" r="4.5" fill="#d8232a" stroke="#fff" strokeWidth="0.5" />
        <path d="M9 9L13 13M13 9L9 13" stroke="#fff" strokeWidth="1.5" />
      </svg>
      <svg viewBox="0 0 16 16" className="ml-2 size-4" fill="none" stroke="#fff" strokeWidth="1.5">
        <path d="M9 14.5H2V2.5H4V1H9V2.5H11" />
        <path d="M8.5 4V7M12.5 4V7" />
        <path d="M6.5 7H14.5V10L12.5 12H8.5L6.5 10Z" fill="#fff" stroke="none" />
        <path d="M10.5 12V15" />
      </svg>
      <svg viewBox="0 0 16 16" className="ml-2 size-4" fill="none" stroke="#fff" strokeWidth="1.5">
        <path d="M1 1V5H5V1M3 5V10M3 1V3" />
        <path d="M7 4H15V12H5M8 15H14M11 12V15" />
      </svg>
      <svg viewBox="0 0 16 16" className="ml-2 size-4" fill="none" stroke="#fff">
        <path d="M1 5H4L7 1.5V14.5L4 11H1Z" fill="#fff" />
        <path d="M9 5.5C10.5 7 10.5 9 9 10.5M11 4C13 6.5 13 9.5 11 12M13 2.5C16 6 16 10 13 13.5" />
      </svg>
      <div className="ml-[9px] w-[66px] text-center leading-[17px]">
        <time className="block">11:34 PM</time>
        <time className="block">8/10/2019</time>
      </div>
      <button
        type="button"
        aria-label="Show desktop"
        className="ml-[3px] h-full w-[15px] border border-[#4c5b6f] bg-linear-to-b from-[#9dadbf] via-[#596b80] to-[#8798ac]"
      />
    </div>
  </footer>
);

const Wallpaper = () => (
  <svg viewBox="0 0 1366 728" preserveAspectRatio="none" className="absolute inset-0 -z-10 h-full w-full">
    <defs>
      <linearGradient id="sky" x1="0" y1="0" x2="0" y2="1">
        <stop offset="0" stopColor="#0046a4" />
        <stop offset="0.2" stopColor="#0058c0" />
        <stop offset="0.4" stopColor="#007ee0" />
        <stop offset="0.7" stopColor="#00a2f6" />
        <stop offset="1" stopColor="#10bdf8" />
      </linearGradient>
      <linearGradient id="floor" x1="0" y1="0" x2="1" y2="0">
        <stop offset="0" stopColor="#12b8f8" />
        <stop offset="0.1" stopColor="#3fcdfb" />
        <stop offset="0.22" stopColor="#6fdcfa" />
        <stop offset="0.36" stopColor="#2fbcff" />
        <stop offset="0.52" stopColor="#1492fb" />
        <stop offset="0.8" stopColor="#0068d8" />
        <stop offset="1" stopColor="#0054b4" />
      </linearGradient>
      <linearGradient id="north" x1="0" y1="0" x2="1" y2="0">
        <stop offset="0" stopColor="#0046a4" />
        <stop offset="1" stopColor="#0c4a88" />
      </linearGradient>
      <linearGradient id="east" x1="0" y1="0" x2="0" y2="1">
        <stop offset="0" stopColor="#0d4a84" />
        <stop offset="0.3" stopColor="#004286" />
        <stop offset="0.6" stopColor="#0050ac" />
        <stop offset="1" stopColor="#0054b4" />
      </linearGradient>
      <radialGradient id="glow" gradientUnits="userSpaceOnUse" cx="160" cy="740" r="190">
        <stop offset="0" stopColor="#5fdcfb" />
        <stop offset="1" stopColor="#20c4fa" stopOpacity="0" />
      </radialGradient>
    </defs>
    <rect width="1366" height="728" fill="url(#sky)" />
    <rect width="1366" height="7" fill="url(#north)" />
    <rect x="114" y="700" width="1252" height="28" fill="url(#floor)" />
    <rect x="1320" width="46" height="728" fill="url(#east)" />
    <rect width="1366" height="728" fill="url(#glow)" />
    <path d="M70 728Q95 715 118 706" fill="none" stroke="#d9f6ff" strokeWidth="2.5" />
    <path d="M100 728L118 708" stroke="#9be5fb" strokeWidth="2" />
    <path d="M134 728L150 712" stroke="#a8e45c" strokeWidth="3" />
    <path d="M645 728C690 718 720 714 760 713" fill="none" stroke="#8fd1ff" strokeWidth="2" />
  </svg>
);

export default function App() {
  return (
    <div className="relative isolate flex h-screen w-full flex-col overflow-hidden font-['Open_Sans','Noto_Sans',sans-serif]">
      <div className="relative flex min-h-0 flex-1">
        <Wallpaper />
        <div className="w-[114px] shrink-0 pt-2">
          <div className="w-[74px]">
            <DesktopIcon label="Recycle Bin"><RecycleBinIcon /></DesktopIcon>
            <DesktopIcon label="Firefox"><FirefoxIcon shortcut /></DesktopIcon>
            <DesktopIcon label="Skype"><SkypeIcon shortcut /></DesktopIcon>
          </div>
        </div>
        <RemoteConnectionWindow />
      </div>
      <Taskbar />
      {/* popup edge rising over the taskbar */}
      <div className="absolute bottom-0 left-[348px] h-[3px] w-[670px] rounded-t-sm bg-[#f4f6f8]" />
      {/* mouse pointer at the screen edge */}
      <div className="absolute top-[431px] right-0 h-[15px] w-[2px] border-y border-l border-black bg-white" />
    </div>
  );
}
